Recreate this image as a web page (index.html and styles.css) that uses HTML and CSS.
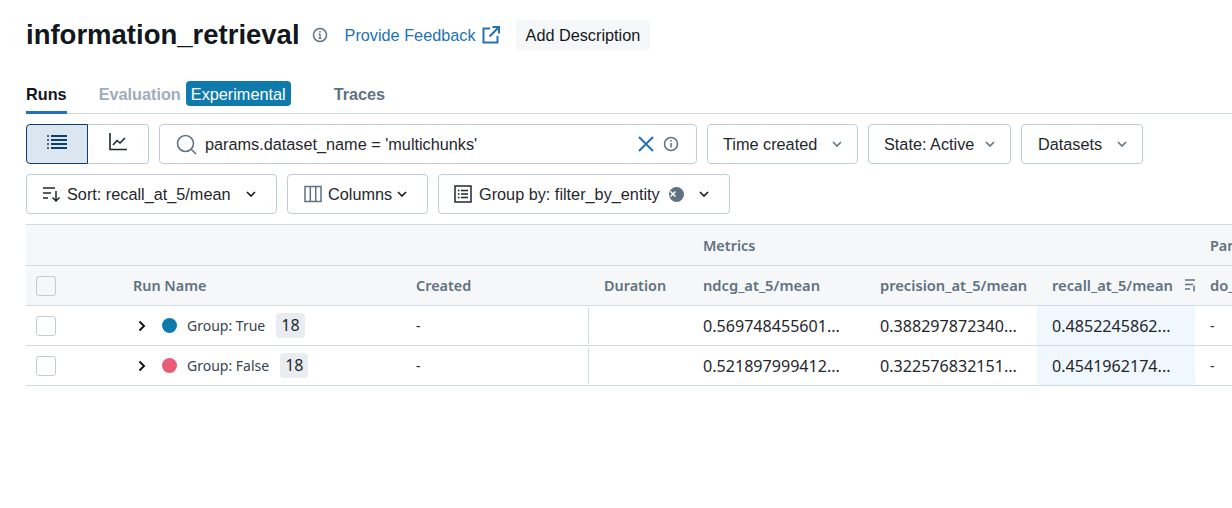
FILE: index.html
```html
<!DOCTYPE html>
<html lang="en">
<head>
  <meta charset="UTF-8" />
  <title>information_retrieval</title>
  <link rel="stylesheet" href="styles.css">
</head>
<body>

  <div class="title-row">
    <h1>information_retrieval</h1>
    <svg class="title-info" width="16" height="16" viewBox="0 0 16 16" fill="none" stroke="#5f7281" stroke-width="1.5">
      <circle cx="8" cy="8" r="6.5" />
      <path d="M8 7v4.5M6.6 7.2H8M6.6 11.4h2.8" stroke-width="1.3" />
      <circle cx="8" cy="4.8" r=".9" fill="#5f7281" stroke="none" />
    </svg>
    <a class="feedback" href="#">Provide Feedback
      <svg width="18" height="18" viewBox="0 0 18 18" fill="none" stroke="#2272b4" stroke-width="2">
        <path d="M8 2.5H1.5v14h14V10" />
        <path d="M7.5 10.5 16.500 1.500M10.500 1h6.500v6.500" />
      </svg>
    </a>
    <button class="add-desc">Add Description</button>
  </div>

  <div class="tabs">
    <div class="tab active">Runs</div>
    <div class="tab disabled">Evaluation <span class="badge">Experimental</span></div>
    <div class="tab">Traces</div>
  </div>

  <div class="toolbar">
    <div class="segments">
      <div class="segment selected">
        <svg width="20" height="16" viewBox="0 0 20 16" stroke="#0e3f6c" stroke-width="2" fill="none">
          <path d="M4 2h16M4 6h16M4 10h16M4 14h16" />
          <path d="M0 2h2M0 6h2M0 10h2M0 14h2" stroke-width="1.500" />
        </svg>
      </div>
      <div class="segment">
        <svg width="18" height="18" viewBox="0 0 18 18" stroke="#1f272d" stroke-width="1.600" fill="none">
          <path d="M1 0v16.500h17" />
          <path d="M4 12l4-4.500 3 2.500 5-5" />
        </svg>
      </div>
    </div>
    <div class="search">
      <svg width="21" height="21" viewBox="0 0 21 21" stroke="#5f7281" stroke-width="1.600" fill="none">
        <circle cx="9.500" cy="9.500" r="8" />
        <path d="M15 15l5 5" />
      </svg>
      <span class="search-text">params.dataset_name = 'multichunks'</span>
      <svg width="16" height="16" viewBox="0 0 16 16" stroke="#2272b4" stroke-width="2" fill="none">
        <path d="M1 1l14 14M15 1 1 15" />
      </svg>
      <svg class="search-info" width="16" height="16" viewBox="0 0 16 16" fill="none" stroke="#5f7281" stroke-width="1.500">
        <circle cx="8" cy="8" r="6.500" />
        <path d="M8 7v4.500" />
        <circle cx="8" cy="4.800" r=".9" fill="#5f7281" stroke="none" />
      </svg>
    </div>
    <button class="btn time">Time created <svg class="chev gray" viewBox="0 0 10 6"><path d="M1 1l4 4 4-4" /></svg></button>
    <button class="btn state">State: Active <svg class="chev gray" viewBox="0 0 10 6"><path d="M1 1l4 4 4-4" /></svg></button>
    <button class="btn datasets">Datasets <svg class="chev gray" viewBox="0 0 10 6"><path d="M1 1l4 4 4-4" /></svg></button>
  </div>

  <div class="toolbar second">
    <button class="btn sort">
      <svg width="18" height="16" viewBox="0 0 18 16" fill="none" stroke="#1f272d" stroke-width="1.500">
        <path d="M0 2h12M0 7h8M0 12h5" />
        <path d="M13 5v10M9.500 11.500 13 15l3.500-3.500" />
      </svg>
      Sort: recall_at_5/mean
      <svg class="chev sort-chev" viewBox="0 0 10 6"><path d="M1 1l4 4 4-4" /></svg>
    </button>
    <button class="btn columns">
      <svg width="18" height="18" viewBox="0 0 18 18" fill="none" stroke="#5f7281" stroke-width="1.500">
        <rect x="1" y="1.500" width="16" height="15" />
        <path d="M6.300 1.500v15M11.700 1.500v15" />
      </svg>
      Columns
      <svg class="chev" viewBox="0 0 10 6"><path d="M1 1l4 4 4-4" /></svg>
    </button>
    <button class="btn group">
      <svg width="18" height="18" viewBox="0 0 18 18" fill="none" stroke="#1f272d" stroke-width="1.500">
        <rect x="1" y="1" width="16" height="16" />
        <path d="M7 5.500h7M7 9h7M7 12.500h7M3.800 5.500h1.700M3.800 9h1.700M3.800 12.500h1.700" />
      </svg>
      Group by: filter_by_entity
      <span class="clear-x">
        <svg width="8" height="8" viewBox="0 0 8 8" stroke="#fff" stroke-width="1.500"><path d="M1.500 1.500l5 5M6.500 1.500l-5 5" /></svg>
      </span>
      <svg class="chev group-chev" viewBox="0 0 10 6"><path d="M1 1l4 4 4-4" /></svg>
    </button>
  </div>

  <div class="runs-table">
    <div class="row head group-head">
      <div></div><div></div><div></div><div></div>
      <div class="cell">Metrics</div>
      <div></div><div></div>
      <div class="cell last">Params</div>
    </div>
    <div class="row head">
      <div class="cell check-cell"><span class="checkbox header-box"></span></div>
      <div class="cell">Run Name</div>
      <div class="cell">Created</div>
      <div class="cell duration">Duration</div>
      <div class="cell metric-name">ndcg_at_5/mean</div>
      <div class="cell metric-name">precision_at_5/mean</div>
      <div class="cell metric-name recall">recall_at_5/mean
        <svg class="sort-mark" width="10" height="14" viewBox="0 0 10 14" fill="none" stroke="#5f7281" stroke-width="1.500"><path d="M0 2h12M0 6.500h8M0 11h5M9 7.500v6" /></svg>
      </div>
      <div class="cell last metric-name">do_sample</div>
    </div>
    <div class="row">
      <div class="cell check-cell"><span class="checkbox"></span></div>
      <div class="cell name">
        <svg class="expander" width="8" height="12" viewBox="0 0 8 12" fill="none" stroke="#11171c" stroke-width="2"><path d="M1.500 1.500 6 6l-4.500 4.500" /></svg>
        <span class="dot blue"></span>
        <span class="group-name">Group: True</span>
        <span class="count">18</span>
      </div>
      <div class="cell created">-</div>
      <div class="cell"></div>
      <div class="cell number">0.569748455601...</div>
      <div class="cell number">0.388297872340...</div>
      <div class="cell number recall value">0.4852245862...</div>
      <div class="cell last">-</div>
    </div>
    <div class="row">
      <div class="cell check-cell"><span class="checkbox"></span></div>
      <div class="cell name">
        <svg class="expander" width="8" height="12" viewBox="0 0 8 12" fill="none" stroke="#11171c" stroke-width="2"><path d="M1.500 1.500 6 6l-4.500 4.500" /></svg>
        <span class="dot pink"></span>
        <span class="group-name">Group: False</span>
        <span class="count">18</span>
      </div>
      <div class="cell created">-</div>
      <div class="cell"></div>
      <div class="cell number">0.521897999412...</div>
      <div class="cell number">0.322576832151...</div>
      <div class="cell number recall value">0.4541962174...</div>
      <div class="cell last">-</div>
    </div>
  </div>

</body>
</html>
```

FILE: styles.css
```css
body {
  margin: 0;
  height: 508px;
  overflow: hidden;
  background-color: #fff;
  color: #1f272d;
  font-family: "Liberation Sans", Arial, sans-serif;
  font-size: 16.25px;
}

.title-row {
  display: flex;
  align-items: center;
  height: 30px;
  padding: 20px 0 0 26px;
}

h1 {
  margin: 0;
  font-size: 27.5px;
  line-height: 30px;
  font-weight: bold;
  color: #11171c;
}

.title-info {
  margin-left: 12px;
}

.feedback {
  display: flex;
  align-items: center;
  gap: 6px;
  margin-left: 17px;
  color: #2272b4;
  text-decoration: none;
}

.add-desc {
  height: 30px;
  margin-left: 16px;
  padding: 0 10px;
  border: none;
  border-radius: 4px;
  background-color: #f6f7f9;
  color: #11171c;
  font-family: inherit;
  font-size: 16.25px;
}

.tabs {
  display: flex;
  align-items: flex-end;
  height: 63px;
  margin: 0 0 0 26px;
  border-bottom: 1px solid #d1d9e1;
  font-weight: bold;
}

.tab {
  display: flex;
  align-items: center;
  height: 33px;
  margin-right: 32px;
  color: #5f7281;
  border-bottom: 3px solid transparent;
  margin-bottom: -1px;
}

.tab.active {
  color: #11171c;
  border-bottom-color: #2272b4;
}

.tab.disabled {
  color: #9eadbb;
  margin-right: 43px;
  gap: 5px;
}

.badge {
  display: inline-block;
  padding: 0 5px;
  height: 25px;
  line-height: 27px;
  margin-bottom: 2px;
  border-radius: 4px;
  background-color: #0f7bad;
  color: #fff;
  font-weight: normal;
}

.toolbar {
  display: flex;
  gap: 10px;
  margin: 10px 0 0 26px;
}

.segments {
  display: flex;
  height: 40px;
}

.segment {
  box-sizing: border-box;
  display: flex;
  align-items: center;
  justify-content: center;
  width: 61px;
  border: 1px solid #c0cdd8;
  border-left: none;
  border-radius: 0 4px 4px 0;
}

.segment svg {
  margin-top: -4px;
}

.segment.selected {
  width: 62px;
  background-color: #dbe6f0;
  border: 1px solid #0e3f6c;
  border-radius: 4px 0 0 4px;
}

.search {
  box-sizing: border-box;
  display: flex;
  align-items: center;
  width: 538px;
  height: 40px;
  padding: 0 17px 0 16px;
  border: 1px solid #c0cdd8;
  border-radius: 4px;
}

.search-text {
  flex: 1;
  margin-left: 8px;
}

.search-info {
  margin-left: 9px;
}

.btn {
  box-sizing: border-box;
  display: flex;
  align-items: center;
  height: 40px;
  padding: 0 15px;
  border: 1px solid #c0cdd8;
  border-radius: 4px;
  background-color: #fff;
  color: #1f272d;
  font-family: inherit;
  font-size: 16.25px;
  white-space: nowrap;
}

.chev {
  width: 10px;
  height: 6px;
  flex-shrink: 0;
  fill: none;
  stroke: #11171c;
  stroke-width: 1.600;
  margin-left: 5px;
}

.chev.gray {
  stroke: #5f7281;
}

.time { width: 151px; gap: 10px; }
.state { width: 143px; gap: 6px; }
.datasets { width: 122px; gap: 10px; padding-left: 16px; }

.sort { width: 251px; padding-left: 16px; }
.sort svg:first-child { margin-right: 6px; }
.sort-chev { margin-left: 15px; }
.columns { width: 141px; padding-left: 16px; }
.columns svg:first-child { margin-right: 6px; }
.group { width: 292px; }
.group svg:first-child { margin-right: 7px; }
.group-chev { margin-left: 15px; }

.clear-x {
  display: flex;
  align-items: center;
  justify-content: center;
  flex-shrink: 0;
  width: 15px;
  height: 15px;
  margin-left: 9px;
  border-radius: 50%;
  background-color: #5f7281;
}

.runs-table {
  margin: 10px 0 0 26px;
  border-top: 1px solid #d1d9e1;
  font-family: "Noto Sans", sans-serif;
  font-size: 14px;
}

.row {
  display: grid;
  grid-template-columns: 97px 283px 183px 104px 177px 167px 158px 100px;
  height: 39px;
  border-bottom: 1px solid #d1d9e1;
  width: 1206px;
  overflow: hidden;
}

.head {
  background-color: #f6f7f9;
  color: #5f7281;
  font-weight: 600;
  font-size: 14.4px;
}

.group-head {
  height: 40px;
}

.metric-name {
  font-size: 14.7px;
  padding-bottom: 1px;
}

.number {
  font-size: 16.1px;
}

.cell {
  display: flex;
  align-items: center;
  min-width: 0;
  padding-left: 10px;
  white-space: nowrap;
}

.check-cell {
  padding-left: 10px;
}

.checkbox {
  box-sizing: border-box;
  display: block;
  width: 20px;
  height: 20px;
  border: 1px solid #c0cdd8;
  border-radius: 3px;
  background-color: #fff;
}

.header-box {
  background-color: #f6f7f9;
}

.duration {
  padding-left: 15px;
}

.recall {
  padding-left: 15px;
  position: relative;
}

.value {
  background-color: #f0f7fe;
}

.sort-mark {
  position: absolute;
  right: 0;
  top: 12px;
}

.last {
  padding-left: 15px;
  overflow: hidden;
}

.name {
  padding-left: 15px;
}

.expander {
  margin-right: 16px;
}

.dot {
  width: 15px;
  height: 15px;
  border-radius: 50%;
  margin-right: 10px;
}

.dot.blue { background-color: #0f7bad; }
.dot.pink { background-color: #e85c78; }

.group-name {
  color: #37444f;
}

.count {
  margin-left: 11px;
  padding: 0 5px;
  height: 25px;
  line-height: 25px;
  border-radius: 4px;
  background-color: #e9edf1;
  font-size: 16px;
}

.created {
  margin: 1px 0;
  border-right: 1px solid #d1d9e1;
}
```
